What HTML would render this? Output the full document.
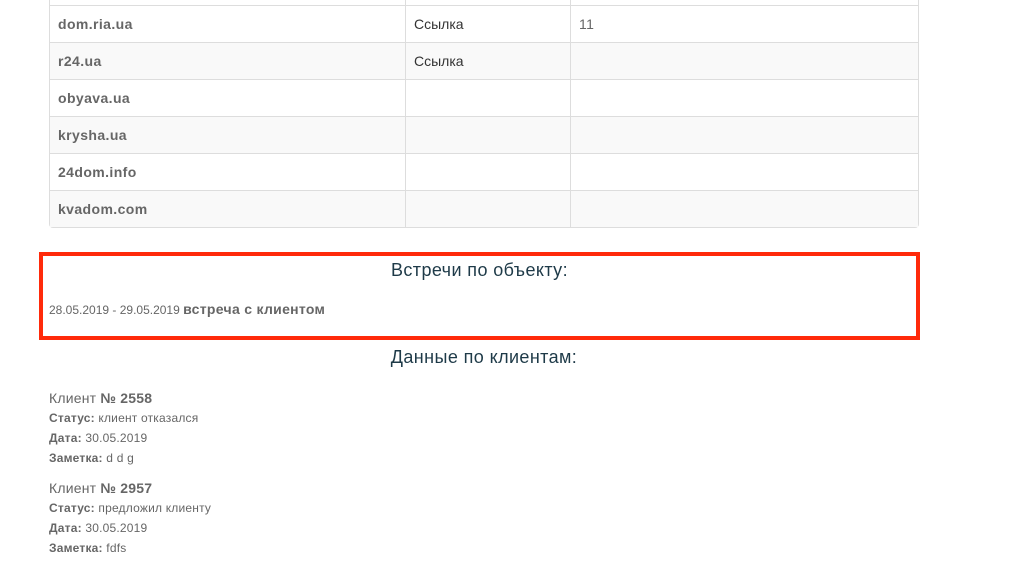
<!DOCTYPE html>
<html><head><meta charset="utf-8"><style>
body{margin:0;width:1014px;height:564px;overflow:hidden;background:#fff;font-family:"Liberation Sans","DejaVu Sans",sans-serif;color:#666;}
table{position:absolute;left:49px;top:5px;width:870px;border-collapse:separate;border-spacing:0;border:1px solid #ddd;border-top:none;border-radius:0 0 4px 4px;font-size:14px;letter-spacing:0.4px;}
td{height:36px;padding:0 8px;border-top:1px solid #ddd;border-left:1px solid #ddd;}
td:first-child{border-left:none;font-weight:bold;width:339px;}
td:nth-child(2){width:148px;color:#333;letter-spacing:0;}
tr:nth-child(even) td{background:#f9f9f9;}
.top{position:absolute;left:49px;top:0;width:870px;height:5px;border-left:1px solid #ddd;border-right:1px solid #ddd;box-sizing:border-box;}
.top:before{content:"";position:absolute;left:355px;top:0;height:5px;border-left:1px solid #ddd}
.top:after{content:"";position:absolute;left:520px;top:0;height:5px;border-left:1px solid #ddd}
.box{position:absolute;left:39px;top:252px;width:881px;height:88px;border:4px solid #ff2a0a;box-sizing:border-box;}
h3{font-weight:normal;font-size:18px;letter-spacing:0.4px;color:#1e3a48;text-align:center;margin:0;position:absolute;width:100%;}
.m{position:absolute;left:6px;top:45px;font-size:12px;}
.m b{font-size:14px;letter-spacing:0.3px}
.c{position:absolute;left:49px;font-size:12px;line-height:20px;letter-spacing:0.2px}
.c .t{font-size:14px;}
</style></head><body>
<div class="top"></div>
<table>
<tr><td>dom.ria.ua</td><td>Ссылка</td><td>11</td></tr>
<tr><td>r24.ua</td><td>Ссылка</td><td></td></tr>
<tr><td>obyava.ua</td><td></td><td></td></tr>
<tr><td>krysha.ua</td><td></td><td></td></tr>
<tr><td>24dom.info</td><td></td><td></td></tr>
<tr><td>kvadom.com</td><td></td><td></td></tr>
</table>
<div class="box"><h3 style="top:4px">Встречи по объекту:</h3>
<div class="m">28.05.2019 - 29.05.2019 <b>встреча с клиентом</b></div></div>
<h3 style="top:347px;left:0;width:968px">Данные по клиентам:</h3>
<div class="c" style="top:388px"><div class="t">Клиент <b>№ 2558</b></div><div><b>Статус:</b> клиент отказался</div><div><b>Дата:</b> 30.05.2019</div><div><b>Заметка:</b> d d g</div></div>
<div class="c" style="top:478px"><div class="t">Клиент <b>№ 2957</b></div><div><b>Статус:</b> предложил клиенту</div><div><b>Дата:</b> 30.05.2019</div><div><b>Заметка:</b> fdfs</div></div>
</body></html>
